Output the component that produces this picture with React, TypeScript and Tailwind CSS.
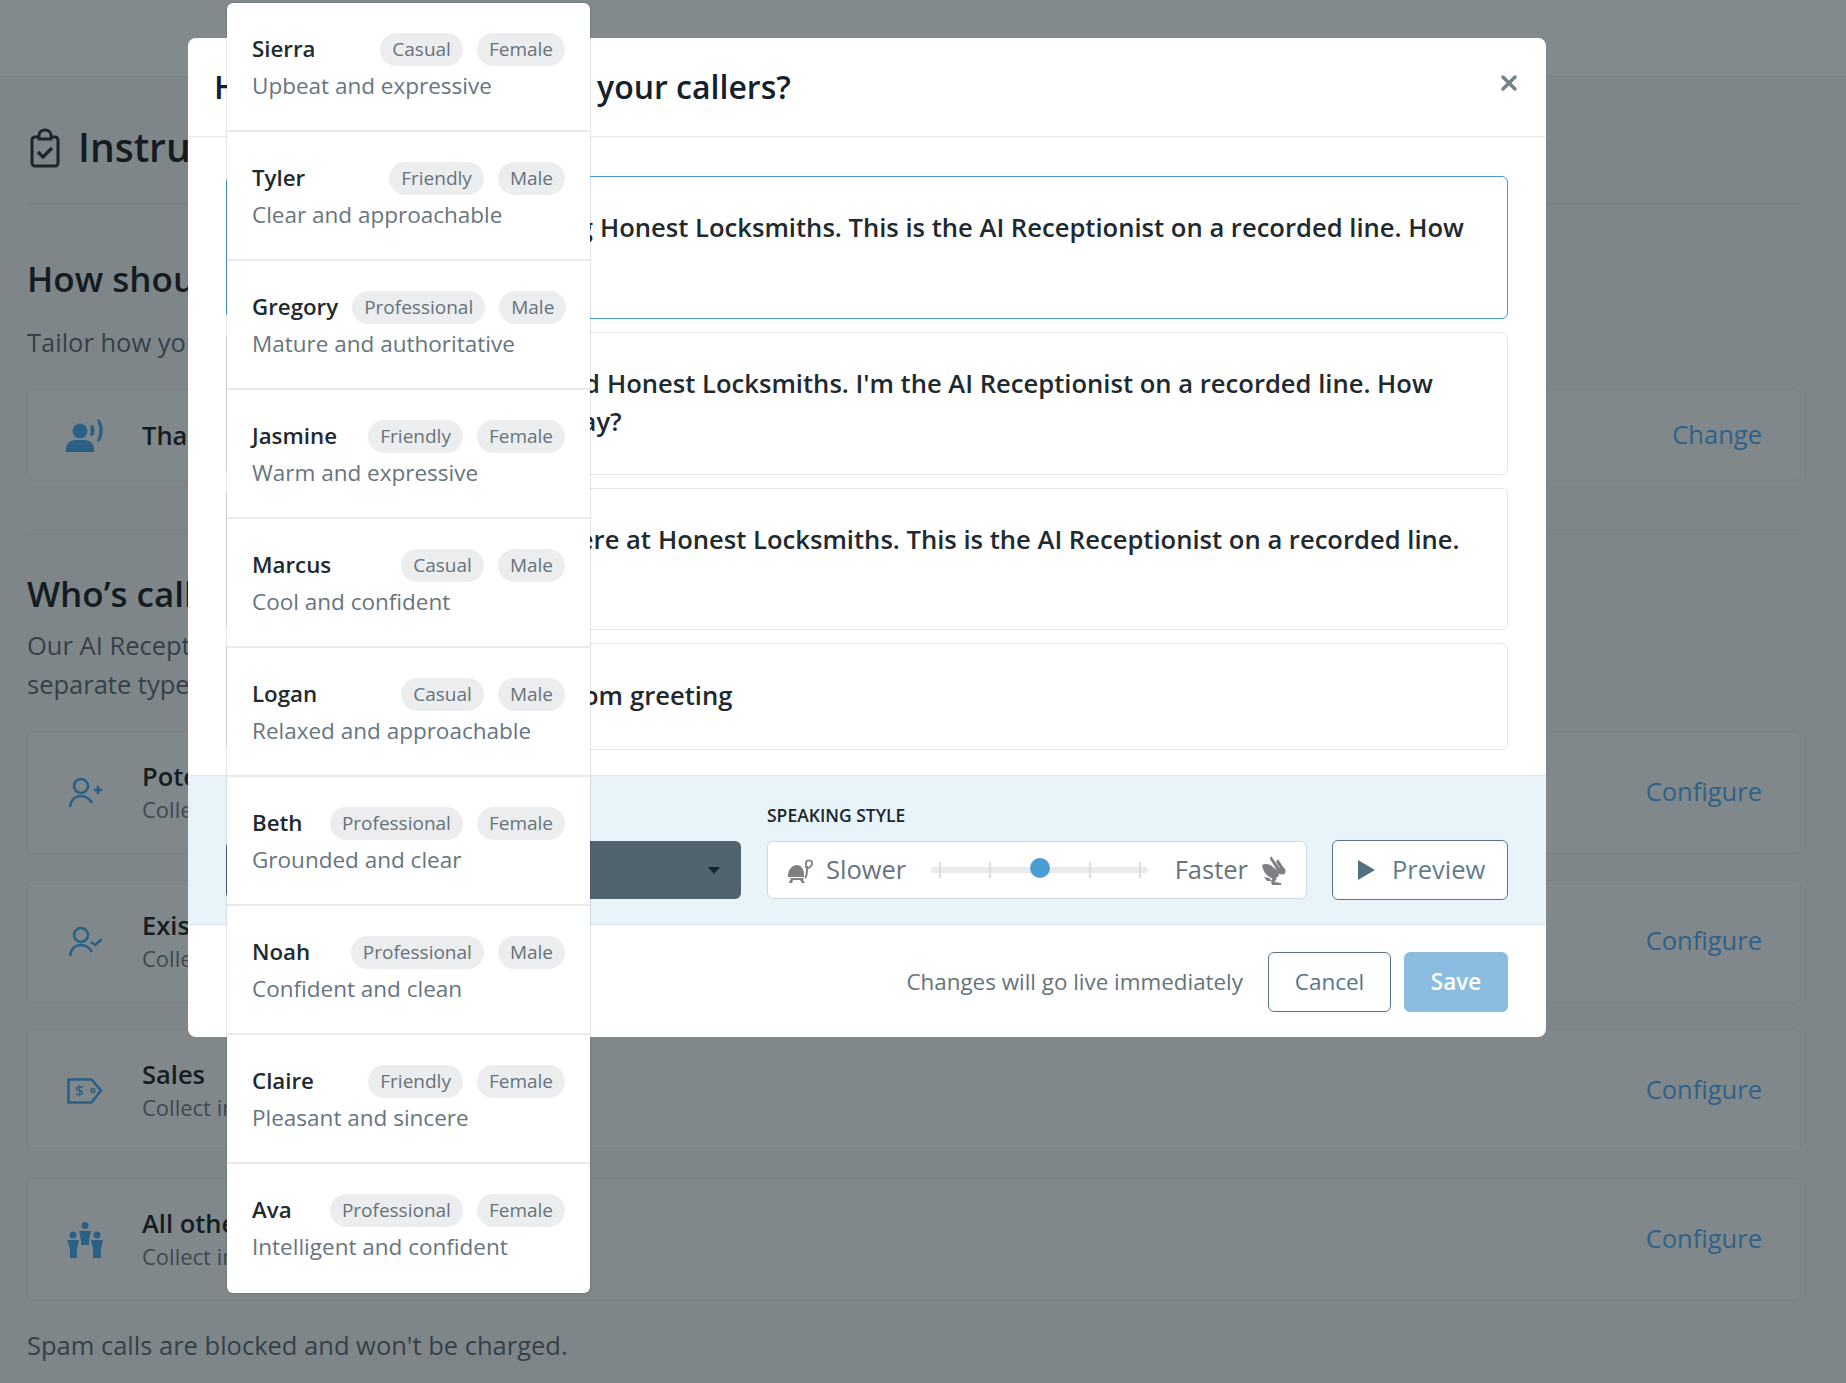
import React from 'react';
import { X } from 'lucide-react';

const voices = [
  { name: 'Sierra', style: 'Casual', gender: 'Female', desc: 'Upbeat and expressive' },
  { name: 'Tyler', style: 'Friendly', gender: 'Male', desc: 'Clear and approachable' },
  { name: 'Gregory', style: 'Professional', gender: 'Male', desc: 'Mature and authoritative' },
  { name: 'Jasmine', style: 'Friendly', gender: 'Female', desc: 'Warm and expressive' },
  { name: 'Marcus', style: 'Casual', gender: 'Male', desc: 'Cool and confident' },
  { name: 'Logan', style: 'Casual', gender: 'Male', desc: 'Relaxed and approachable' },
  { name: 'Beth', style: 'Professional', gender: 'Female', desc: 'Grounded and clear' },
  { name: 'Noah', style: 'Professional', gender: 'Male', desc: 'Confident and clean' },
  { name: 'Claire', style: 'Friendly', gender: 'Female', desc: 'Pleasant and sincere' },
  { name: 'Ava', style: 'Professional', gender: 'Female', desc: 'Intelligent and confident' },
];

const ClipboardIcon = () => (
  <svg width="30" height="40" viewBox="0 0 30 40" fill="none" stroke="#1b262c" strokeWidth="3">
    <path d="M9 9H5a3 3 0 0 0-3 3v23a3 3 0 0 0 3 3h20a3 3 0 0 0 3-3V12a3 3 0 0 0-3-3h-4" />
    <path d="M9 11V7a6 5 0 0 1 12 0v4z" />
    <path d="M8 24l5 5 9-9" strokeWidth="3.2" />
  </svg>
);

const SpeakerIcon = () => (
  <svg width="38" height="33" viewBox="0 0 38 33" fill="#2b6086">
    <circle cx="14" cy="12" r="7.500" />
    <path d="M0 33v-3c0-6 5-9 10-9h8c5 0 10 3 10 9v3z" />
    <path d="M27 6c2 3 2 8 0 11l-3-1c1-3 1-6 0-9z" />
    <path d="M33 0c5 6 5 17 0 23l-2-1c3-6 3-15 0-21z" />
  </svg>
);

const PersonPlusIcon = () => (
  <svg width="33" height="31" viewBox="0 0 33 31" fill="none" stroke="#2b6086" strokeWidth="2.6">
    <circle cx="12" cy="9" r="7" />
    <path d="M1 30c1-8 6-11 11-11s8 2 11 7" />
    <path d="M25 13h8M29 9v8" />
  </svg>
);

const PersonCheckIcon = () => (
  <svg width="33" height="31" viewBox="0 0 33 31" fill="none" stroke="#2b6086" strokeWidth="2.6">
    <circle cx="12" cy="9" r="7" />
    <path d="M1 30c1-8 6-11 11-11s8 2 11 7" />
    <path d="M22 16l4 3 7-6" />
  </svg>
);

const TagIcon = () => (
  <svg width="36" height="26" viewBox="0 0 36 26" fill="none" stroke="#2b6086" strokeWidth="2.6">
    <path d="M1.500 1.500h23l9.500 11-9.500 12h-23z" />
    <circle cx="26" cy="12.500" r="1.800" strokeWidth="1.600" />
    <text x="8" y="18" fontFamily="Open Sans" fontSize="15" fontWeight="600" fill="#2b6086" stroke="none">$</text>
  </svg>
);

const PeopleIcon = () => (
  <svg width="36" height="36" viewBox="0 0 36 36" fill="#2b6086">
    <circle cx="18" cy="3.500" r="3.500" />
    <path d="M12 9h12l-2 9v5h-8v-5z" />
    <circle cx="6" cy="13" r="3.500" />
    <path d="M0 18h12l-2 9v9H3v-9z" />
    <circle cx="30" cy="13" r="3.500" />
    <path d="M24 18h12l-2 9v9h-8v-9z" />
  </svg>
);

const TurtleIcon = () => (
  <svg width="25" height="27" viewBox="0 0 25 27" fill="#7d7f83">
    <path d="M0 18c0-6 5-10 9-10s7 4 7 10v2H0z" />
    <path d="M2 21h14l-1 2H3z" />
    <path d="M2 23h3l-1 3H1zM12 23h3l2 3h-3z" />
    <path d="M17 21c2-2 2-5 2-9V9" fill="none" stroke="#7d7f83" strokeWidth="2" />
    <path d="M18 10V5a3.500 3.500 0 0 1 6 0v3l-3 3z" fill="none" stroke="#7d7f83" strokeWidth="1.800" />
  </svg>
);

const RabbitIcon = () => (
  <svg width="26" height="29" viewBox="0 0 26 29" fill="#7d7f83">
    <path d="M1 9c4-2 8-1 11 2l6 5c1 3-1 5-3 6l-3 1-5-3C4 18 2 14 1 9z" />
    <path d="M10 0l10 14-3 2L9 3z" />
    <path d="M17 3l7 11-3 1-6-9z" />
    <circle cx="21" cy="15" r="3.500" />
    <path d="M3 21l5 1 3 3H6z" />
    <path d="M12 21l4 2-3 3 7 1v2h-9l-1-3z" />
  </svg>
);

const Card = ({ icon, title, sub, action, h = 'h-[123px]' }: { icon: React.ReactNode; title: string; sub?: string; action: string; h?: string }) => (
  <div className={`${h} flex items-center rounded-md border border-[#7a8184] bg-[#81888b]`}>
    <div className="flex w-[114px] shrink-0 justify-center">{icon}</div>
    <div className="flex-1">
      <div className="text-[25.500px] leading-[34px] font-semibold text-[#161d21]">{title}</div>
      {sub && <div className="text-[22px] leading-[33px] text-[#3d484f]">{sub}</div>}
    </div>
    <div className="pr-[38px] pb-[2px] text-[25.500px] text-[#2f6189]">{action}</div>
  </div>
);

const Option = ({ h, selected, children }: { h: string; selected?: boolean; children: React.ReactNode }) => (
  <div
    className={`${h} flex items-center rounded-md border pr-[28px] pl-[135px] text-[25.600px] leading-[38px] font-semibold text-[#1e2a30] ${
      selected ? 'border-[#4b9cd3]' : 'border-[#e3e6e8]'
    }`}
  >
    <div className="-mt-[1px]">{children}</div>
  </div>
);

export default function App() {
  return (
    <div className="relative h-[1383px] w-full overflow-hidden bg-[#7f8689] font-['Open_Sans',sans-serif]">
      {/* page behind the modal */}
      <div className="h-[77px] border-b border-[#787f82] bg-[#828a8d]" />
      <div className="pr-[45px] pl-[27px]">
        <div className="flex h-[127px] items-center gap-[18px] border-b border-[#787f82] pt-[15px] pl-[3px]">
          <ClipboardIcon />
          <h1 className="text-[39px] font-semibold text-[#141c21]">Instructions</h1>
        </div>
        <h2 className="mt-[52px] text-[35px] leading-[46px] font-semibold text-[#141c21]">How should our AI greet your callers?</h2>
        <p className="mt-[22px] text-[25.500px] leading-[36px] text-[#354049]">Tailor how your AI Receptionist greets each caller</p>
        <div className="mt-[29px]">
          <Card icon={<SpeakerIcon />} title="Thanks for calling" action="Change" h="h-[92px]" />
        </div>
        <div className="mt-[52px] border-t border-[#787f82] pt-[37px]">
          <h2 className="text-[35px] leading-[46px] font-semibold text-[#141c21]">Who’s calling?</h2>
          <p className="mt-[9px] text-[25.500px] leading-[39px] text-[#354049]">
            Our AI Receptionist collects information from
            <br />
            separate types of callers
          </p>
        </div>
        <div className="mt-[27px] flex flex-col gap-[26px]">
          <Card icon={<PersonPlusIcon />} title="Potential customers" sub="Collect information" action="Configure" />
          <Card icon={<PersonCheckIcon />} title="Existing customers" sub="Collect information" action="Configure" />
          <Card icon={<TagIcon />} title="Sales" sub="Collect information" action="Configure" />
          <Card icon={<PeopleIcon />} title="All others" sub="Collect information" action="Configure" />
        </div>
        <p className="mt-[25px] text-[25.500px] text-[#354049]">Spam calls are blocked and won't be charged.</p>
      </div>

      {/* greeting modal */}
      <div className="absolute top-[38px] left-[188px] w-[1358px] rounded-lg bg-white">
        <div className="relative flex h-[99px] items-center border-b border-[#e8ebed] pb-[1px] pl-[26px]">
          <h3 className="text-[32px] font-semibold text-[#13212b]">
            <span className="inline-block w-[383px]">How should we answer</span>your callers?
          </h3>
          <X className="absolute top-[33px] right-[25px] text-[#75828a]" size={24} strokeWidth={3.500} />
        </div>
        <div className="flex flex-col gap-[13px] px-[38px] pt-[39px] pb-[25px]">
          <Option h="h-[143px]" selected>
            <span className="inline-block w-[238px] pr-[7px] text-right whitespace-nowrap">Thanks for calling</span>Honest Locksmiths. This is the AI Receptionist on a recorded line. How can I help?
          </Option>
          <Option h="h-[143px]">
            <span className="inline-block w-[245px] pr-[7px] text-right whitespace-nowrap">Hi, you've reached</span>Honest Locksmiths. I'm the AI Receptionist on a recorded line. How can I help you today?
          </Option>
          <Option h="h-[142px]">
            <span className="inline-block w-[296px] pr-[7px] text-right whitespace-nowrap">Hi, we're right here at</span>Honest Locksmiths. This is the AI Receptionist on a recorded line. How can I help?
          </Option>
          <Option h="h-[107px]">
            <span className="inline-block w-[268px] pr-[7px] text-right whitespace-nowrap">Write a custom</span>greeting
          </Option>
        </div>
        <div className="flex h-[150px] items-end gap-[26px] border-y border-[#dfe7ec] bg-[#e9f4fa] px-[38px] pb-[25px]">
          <div className="w-[515px]">
            <div className="mb-[12px] pl-[2px] text-[17.500px] font-semibold text-[#1b262c] uppercase">Voice</div>
            <div className="flex h-[58px] items-center justify-end rounded-md bg-[#51636e] pr-[21px]">
              <div className="h-0 w-0 border-x-[6px] border-t-[7px] border-x-transparent border-t-[#15232c]" />
            </div>
          </div>
          <div className="w-[540px]">
            <div className="mb-[14px] text-[17.500px] leading-[23px] font-semibold text-[#1b262c] uppercase">Speaking style</div>
            <div className="flex h-[58px] items-center rounded-md border border-[#cdd8df] bg-white pr-[19px] pl-[20px] text-[25.500px] text-[#67747c]">
              <TurtleIcon />
              <span className="mb-[1px] ml-[13px]">Slower</span>
              <div className="relative mx-[26px] h-[6px] flex-1 -translate-x-px rounded-full bg-[#e9ebed]">
                <div className="absolute top-[-5px] left-[8px] h-[16px] w-[2px] bg-[#dcdfe1]" />
                <div className="absolute top-[-5px] left-[58px] h-[16px] w-[2px] bg-[#dcdfe1]" />
                <div className="absolute top-[-5px] left-[158px] h-[16px] w-[2px] bg-[#dcdfe1]" />
                <div className="absolute top-[-5px] left-[208px] h-[16px] w-[2px] bg-[#dcdfe1]" />
                <div className="absolute top-[-9px] left-[99px] h-[20px] w-[20px] rounded-full bg-[#4b9cd3]" />
              </div>
              <span className="mr-[13px] mb-[1px]">Faster</span>
              <RabbitIcon />
            </div>
          </div>
          <div className="-mb-px -ml-px flex h-[60px] flex-1 items-center gap-[17px] rounded-md border border-[#5b7488] bg-white pb-[1px] pl-[25px] text-[25.500px] text-[#5f7c90]">
            <div className="h-0 w-0 border-y-[10px] border-l-[17px] border-y-transparent border-l-[#55717f]" />
            Preview
          </div>
        </div>
        <div className="flex h-[112px] items-center justify-end pt-[2px] pr-[38px]">
          <span className="mr-[25px] text-[22.400px] text-[#65737b]">Changes will go live immediately</span>
          <div className="flex h-[60px] w-[123px] items-center justify-center rounded-md border border-[#5b7488] text-[22.500px] text-[#55758c]">Cancel</div>
          <div className="ml-[13px] flex h-[60px] w-[104px] items-center justify-center rounded-md bg-[#8abde0] text-[22.500px] font-semibold text-white">Save</div>
        </div>
      </div>

      {/* voice dropdown */}
      <div className="absolute top-[3px] left-[227px] w-[363px] rounded-md bg-white shadow-[0_0_2px_rgba(0,0,0,0.35)]">
        {voices.map((v) => (
          <div key={v.name} className="flex h-[129px] flex-col border-b-2 border-[#e8eaec] pt-[30px] pr-[25px] pl-[25px] last:border-b-0">
            <div className="flex h-[33px] items-center gap-[14px]">
              <span className="-mt-[2px] flex-1 text-[22.300px] font-semibold text-[#1e2a30]">{v.name}</span>
              <span className="rounded-full bg-[#ebedef] px-[12px] text-[19px] leading-[33px] text-[#67737b]">{v.style}</span>
              <span className="rounded-full bg-[#ebedef] px-[12px] text-[19px] leading-[33px] text-[#67737b]">{v.gender}</span>
            </div>
            <div className="mt-[5px] text-[22.500px] leading-[30px] text-[#67757e]">{v.desc}</div>
          </div>
        ))}
      </div>
    </div>
  );
}
